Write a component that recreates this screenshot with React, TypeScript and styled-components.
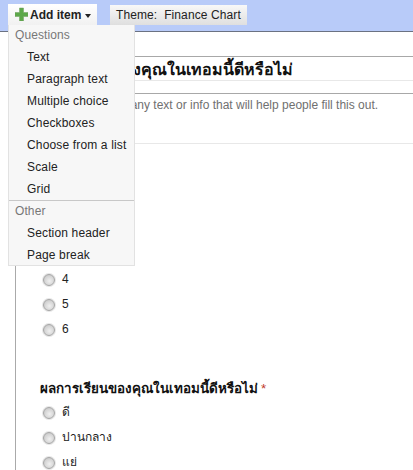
import React from 'react';
import styled, { createGlobalStyle } from 'styled-components';

const GlobalStyle = createGlobalStyle`
  html, body {
    margin: 0;
    padding: 0;
    background: #fff;
    overflow: hidden;
  }
  body {
    font-family: "Liberation Sans", Arial, "Noto Sans", sans-serif;
    font-size: 12px;
    color: #222;
  }
`;

const Page = styled.div`
  position: relative;
  width: 413px;
  height: 470px;
  overflow: hidden;
`;

const Toolbar = styled.div`
  display: flex;
  align-items: flex-start;
  gap: 13px;
  box-sizing: border-box;
  height: 32px;
  padding: 4px 0 0 8px;
  background: #b8cbf9;
  border-bottom: 1px solid #6b7282;
`;

const AddButton = styled.div`
  display: flex;
  align-items: center;
  box-sizing: border-box;
  width: 89px;
  height: 21px;
  padding-left: 7px;
  background: linear-gradient(#ffffff, #f1f1f1);
  font-size: 12px;
  font-weight: bold;
  color: #222;
`;

const PlusSvg = styled.svg`
  flex: none;
  width: 13px;
  height: 14px;
  margin: -1px 2px 0 0;
`;

const Caret = styled.span`
  width: 0;
  height: 0;
  margin-left: 4px;
  margin-top: 2px;
  border-left: 3.5px solid transparent;
  border-right: 3.5px solid transparent;
  border-top: 4px solid #222;
`;

const ThemeButton = styled.div`
  display: flex;
  align-items: center;
  box-sizing: border-box;
  height: 20px;
  width: 137px;
  margin-top: 1px;
  padding: 0 6px;
  background: linear-gradient(#f8f8f8, #dfdfdf);
  font-size: 12px;
  letter-spacing: 0.1px;
  color: #222;
  white-space: pre;
`;

const Form = styled.div`
  margin-left: 15px;
  padding-top: 24px;
  border-left: 1px solid #aaa;
  min-height: 420px;
`;

const TitleBlock = styled.div`
  border-top: 1px solid #a8a8a8;
  border-bottom: 1px solid #e8e8e8;
  height: 23px;
  line-height: 25px;
  font-size: 16px;
  font-weight: bold;
  color: #111;
  white-space: nowrap;
  margin-left: -1px;
  padding-left: 16px;
  font-family: "Liberation Sans", "Noto Sans", "DejaVu Sans", sans-serif;
`;

const Description = styled.div`
  margin-top: 12px;
  margin-left: -1px;
  height: 51px;
  box-sizing: border-box;
  padding: 4px 0 0 28px;
  border-top: 1px solid #a8a8a8;
  border-bottom: 1px solid #e8e8e8;
  font-size: 12px;
  line-height: 14px;
  color: #707070;
  white-space: nowrap;
`;

const Question = styled.div<{ $gap: number }>`
  margin-top: ${(p) => p.$gap}px;
  padding-left: 24px;
`;

const QuestionTitle = styled.div`
  height: 20px;
  line-height: 20px;
  font-size: 13.4px;
  font-weight: bold;
  color: #111;
  white-space: nowrap;
`;

const Required = styled.span`
  margin-left: 3px;
  color: #c0392b;
  font-weight: normal;
`;

const Options = styled.div`
  display: flex;
  flex-direction: column;
  padding-left: 3px;
`;

const Option = styled.label<{ $h: number }>`
  display: flex;
  align-items: center;
  gap: 7px;
  height: ${(p) => p.$h}px;
  font-size: 12px;
  color: #222;
`;

const Radio = styled.input.attrs({ type: 'radio' })`
  appearance: none;
  flex: none;
  box-sizing: border-box;
  width: 12px;
  height: 12px;
  margin: 2px 0 0 0;
  border-radius: 50%;
  border: 1px solid #a5a5a5;
  background: radial-gradient(circle at 55% 60%, #f0f0f0 0%, #d6d6d6 55%, #bcbcbc 100%);
  box-shadow: 0 0 0 1px #e6e6e6;
`;

const Menu = styled.div`
  position: absolute;
  left: 8px;
  top: 25px;
  box-sizing: border-box;
  width: 127px;
  height: 241px;
  background: #f7f7f7;
  border: 1px solid #e2e2e2;
  border-top: none;
`;

const MenuHeading = styled.div<{ $h: number }>`
  height: ${(p) => p.$h}px;
  line-height: ${(p) => 2 * p.$h - 22}px;
  padding-left: 6px;
  font-size: 12px;
  letter-spacing: 0.1px;
  color: #777;
`;

const MenuItem = styled.div`
  height: 22px;
  line-height: 22px;
  padding-left: 18px;
  font-size: 12px;
  letter-spacing: 0.15px;
  color: #222;
  white-space: nowrap;
`;

const MenuDivider = styled.div`
  height: 1px;
  background: #c8c8c8;
`;

const PlusIcon = () => (
  <PlusSvg viewBox="0 0 13 14">
    <path
      d="M4.5 1h4v4.5H13v4H8.5V14h-4V9.5H0v-4h4.5z"
      fill="#5da84a"
      stroke="#6f9f5f"
      strokeWidth="0.5"
    />
  </PlusSvg>
);

const questionItems = ['Text', 'Paragraph text', 'Multiple choice', 'Checkboxes', 'Choose from a list', 'Scale', 'Grid'];
const otherItems = ['Section header', 'Page break'];

export default function App() {
  return (
    <Page>
      <GlobalStyle />
      <Toolbar>
        <AddButton>
          <PlusIcon />
          Add item
          <Caret />
        </AddButton>
        <ThemeButton>{'Theme:  Finance Chart'}</ThemeButton>
      </Toolbar>
      <Form>
        <TitleBlock>ผลการเรียนของคุณในเทอมนี้ดีหรือไม่</TitleBlock>
        <Description>You can include any text or info that will help people fill this out.</Description>
        <Question $gap={122}>
          <Options>
            {['4', '5', '6'].map((n) => (
              <Option key={n} $h={25}>
                <Radio name="q1" />
                {n}
              </Option>
            ))}
          </Options>
        </Question>
        <Question $gap={38}>
          <QuestionTitle>
            ผลการเรียนของคุณในเทอมนี้ดีหรือไม่<Required>*</Required>
          </QuestionTitle>
          <Options>
            {['ดี', 'ปานกลาง', 'แย่'].map((n) => (
              <Option key={n} $h={25}>
                <Radio name="q2" />
                {n}
              </Option>
            ))}
          </Options>
        </Question>
      </Form>
      <Menu>
        <MenuHeading $h={21}>Questions</MenuHeading>
        {questionItems.map((item) => (
          <MenuItem key={item}>{item}</MenuItem>
        ))}
        <MenuDivider />
        <MenuHeading $h={21}>Other</MenuHeading>
        {otherItems.map((item) => (
          <MenuItem key={item}>{item}</MenuItem>
        ))}
      </Menu>
    </Page>
  );
}
